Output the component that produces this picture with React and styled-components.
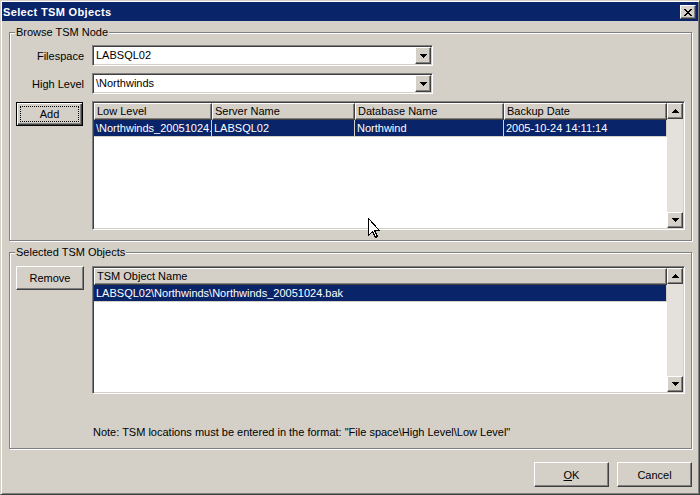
import React from "react";
import styled, { createGlobalStyle, css } from "styled-components";

const GlobalStyle = createGlobalStyle`
  html, body {
    margin: 0;
    padding: 0;
    background: #d4d0c8;
  }
  body {
    font-family: "Liberation Sans", Arial, sans-serif;
    font-size: 11px;
    color: #000;
  }
  * {
    box-sizing: border-box;
  }
`;

const raised = css`
  border: 1px solid;
  border-color: #fff #404040 #404040 #fff;
  box-shadow: inset -1px -1px #808080;
  background: #d4d0c8;
`;

const sunken = css`
  border: 1px solid;
  border-color: #808080 #fff #fff #808080;
  padding: 1px;
  box-shadow: inset 1px 1px #404040, inset -1px -1px #d4d0c8;
`;

const Window = styled.div`
  position: relative;
  width: 700px;
  height: 495px;
  display: flex;
  flex-direction: column;
  background: #d4d0c8;
  border: 1px solid;
  border-color: #d4d0c8 #404040 #404040 #d4d0c8;
  padding: 1px;
  box-shadow: inset 1px 1px #fff, inset -1px -1px #808080;
  overflow: hidden;
`;

const TitleBar = styled.div`
  height: 19px;
  flex-shrink: 0;
  display: flex;
  align-items: center;
  justify-content: space-between;
  padding: 0 2px 0 1px;
  background: #0a246a;
`;

const TitleText = styled.span`
  color: #fff;
  font-weight: bold;
  font-size: 11px;
  letter-spacing: 0.35px;
`;

const CloseButton = styled.div`
  ${raised};
  width: 16px;
  height: 14px;
  display: flex;
  align-items: center;
  justify-content: center;
  margin-top: 1px;
`;

const Body = styled.div`
  flex: 1;
  display: flex;
  flex-direction: column;
  padding: 5px 6px 0 7px;
`;

const GroupBox = styled.fieldset`
  margin: ${p => p.$top || 0}px 0 0 0;
  padding: ${p => p.$pad}px 6px ${p => p.$bottom}px 6px;
  border: 1px solid #808080;
  box-shadow: inset 1px 1px #fff, 1px 1px #fff;
  min-width: 0;
`;

const Legend = styled.legend`
  padding: 0 1px;
  margin-left: -1px;
  line-height: 13px;
  background: #d4d0c8;
`;

const FormGrid = styled.div`
  display: grid;
  grid-template-columns: 68px 1fr;
  column-gap: 8px;
  row-gap: 7px;
  align-items: center;
`;

const FieldLabel = styled.div`
  text-align: right;
`;

const ComboBox = styled.div`
  ${sunken};
  width: 341px;
  height: 21px;
  background: #fff;
  display: flex;
  align-items: stretch;
`;

const ComboText = styled.div`
  flex: 1;
  padding-left: 2px;
  line-height: 17px;
`;

const DropButton = styled.div`
  ${raised};
  width: 16px;
  display: flex;
  align-items: center;
  justify-content: center;
`;

const PushButton = styled.div`
  ${raised};
  width: ${p => p.$w || 68}px;
  height: ${p => p.$h || 24}px;
  display: flex;
  align-items: center;
  justify-content: center;
  ${p =>
    p.$default &&
    css`
      border-color: #000;
      box-shadow: inset 1px 1px #fff, inset -1px -1px #404040, inset -2px -2px #808080;
    `}
`;

const FocusRing = styled.span`
  display: flex;
  align-items: center;
  justify-content: center;
  width: calc(100% - 6px);
  height: calc(100% - 6px);
  border: 1px dotted #000;
`;

const ButtonCell = styled.div`
  align-self: start;
  margin-top: ${p => p.$mt || 0}px;
`;

const ListView = styled.div`
  ${sunken};
  height: ${p => p.$h}px;
  display: flex;
  background: #fff;
`;

const ListMain = styled.div`
  flex: 1;
  min-width: 0;
  display: flex;
  flex-direction: column;
`;

const HeaderRow = styled.div`
  display: flex;
  height: 17px;
  flex-shrink: 0;
`;

const HeaderCell = styled.div`
  ${raised};
  width: ${p => (p.$w ? `${p.$w}px` : "auto")};
  flex: ${p => (p.$w ? "0 0 auto" : "1")};
  padding: 0 2px;
  line-height: 14px;
  white-space: nowrap;
  overflow: hidden;
`;

const Row = styled.div`
  display: flex;
  height: 17px;
  flex-shrink: 0;
  background: ${p => (p.$selected ? "#0a246a" : "#fff")};
  color: ${p => (p.$selected ? "#fff" : "#000")};
`;

const Cell = styled.div`
  width: ${p => (p.$w ? `${p.$w}px` : "auto")};
  flex: ${p => (p.$w ? "0 0 auto" : "1")};
  padding: 0 2px;
  line-height: 16px;
  white-space: nowrap;
  overflow: hidden;
  text-overflow: clip;
  border-right: 1px solid #d4d0c8;
  border-bottom: 1px solid #d4d0c8;
`;

const ScrollBar = styled.div`
  width: 16px;
  flex-shrink: 0;
  display: flex;
  flex-direction: column;
`;

const ScrollButton = styled.div`
  ${raised};
  height: 16px;
  flex-shrink: 0;
  display: flex;
  align-items: center;
  justify-content: center;
`;

const ScrollTrack = styled.div`
  flex: 1;
  background: #e4e1dc;
`;

const Note = styled.div`
  margin-top: 25px;
  padding-left: 1px;
  line-height: 13px;
`;

const ButtonBar = styled.div`
  display: flex;
  justify-content: flex-end;
  gap: 8px;
  margin-top: 13px;
`;

const Cursor = styled.svg`
  position: absolute;
  left: 367px;
  top: 217px;
`;

const Arrow = ({ up }) => (
  <svg width="7" height="4" viewBox="0 0 7 4" shapeRendering="crispEdges">
    <path
      d={
        up
          ? "M3 0h1v1h1v1h1v1h1v1h-7v-1h1v-1h1v-1h1z"
          : "M0 0h7v1h-1v1h-1v1h-1v1h-1v-1h-1v-1h-1v-1h-1z"
      }
      fill="#000"
    />
  </svg>
);

const CloseGlyph = () => (
  <svg width="8" height="7" viewBox="0 0 8 7" shapeRendering="crispEdges">
    <path
      d="M0 0h2v1h1v1h2v-1h1v-1h2v1h-1v1h-1v1h-1v1h1v1h1v1h1v1h-2v-1h-1v-1h-2v1h-1v1h-2v-1h1v-1h1v-1h1v-1h-1v-1h-1v-1h-1z"
      fill="#000"
    />
  </svg>
);

const Scroller = () => (
  <ScrollBar>
    <ScrollButton>
      <Arrow up />
    </ScrollButton>
    <ScrollTrack />
    <ScrollButton>
      <Arrow />
    </ScrollButton>
  </ScrollBar>
);

const Combo = ({ value }) => (
  <ComboBox>
    <ComboText>{value}</ComboText>
    <DropButton>
      <Arrow />
    </DropButton>
  </ComboBox>
);

const App = () => {
  return (
    <Window>
      <GlobalStyle />
      <TitleBar>
        <TitleText>Select TSM Objects</TitleText>
        <CloseButton>
          <CloseGlyph />
        </CloseButton>
      </TitleBar>
      <Body>
        <GroupBox $pad={6} $bottom={10}>
          <Legend>Browse TSM Node</Legend>
          <FormGrid>
            <FieldLabel>Filespace</FieldLabel>
            <Combo value="LABSQL02" />
            <FieldLabel>High Level</FieldLabel>
            <Combo value="\Northwinds" />
            <ButtonCell $mt={1}>
              <PushButton $default $w={67}>
                <FocusRing>Add</FocusRing>
              </PushButton>
            </ButtonCell>
            <ListView $h={129}>
              <ListMain>
                <HeaderRow>
                  <HeaderCell $w={118}>Low Level</HeaderCell>
                  <HeaderCell $w={143}>Server Name</HeaderCell>
                  <HeaderCell $w={149}>Database Name</HeaderCell>
                  <HeaderCell>Backup Date</HeaderCell>
                </HeaderRow>
                <Row $selected>
                  <Cell $w={118}>\Northwinds_20051024.</Cell>
                  <Cell $w={143}>LABSQL02</Cell>
                  <Cell $w={149}>Northwind</Cell>
                  <Cell>2005-10-24 14:11:14</Cell>
                </Row>
              </ListMain>
              <Scroller />
            </ListView>
          </FormGrid>
        </GroupBox>
        <GroupBox $top={5} $pad={7} $bottom={9}>
          <Legend>Selected TSM Objects</Legend>
          <FormGrid>
            <ButtonCell>
              <PushButton>Remove</PushButton>
            </ButtonCell>
            <ListView $h={128}>
              <ListMain>
                <HeaderRow>
                  <HeaderCell>TSM Object Name</HeaderCell>
                </HeaderRow>
                <Row $selected>
                  <Cell>LABSQL02\Northwinds\Northwinds_20051024.bak</Cell>
                </Row>
              </ListMain>
              <Scroller />
            </ListView>
            <div />
            <Note>
              Note: TSM locations must be entered in the format: "File space\High Level\Low Level"
            </Note>
          </FormGrid>
        </GroupBox>
        <ButtonBar>
          <PushButton $w={75} $h={25}>
            <span>
              <u>O</u>K
            </span>
          </PushButton>
          <PushButton $w={75} $h={25}>
            Cancel
          </PushButton>
        </ButtonBar>
      </Body>
      <Cursor width="13" height="21" viewBox="0 0 13 21" shapeRendering="crispEdges">
        <path
          d="M0.5 0.5 L0.5 17.5 L4.5 13.5 L7.5 19.5 L9.5 18.5 L6.5 12.5 L11.5 12.5 Z"
          fill="#fff"
          stroke="#000"
          strokeWidth="1"
        />
      </Cursor>
    </Window>
  );
};

export default App;
